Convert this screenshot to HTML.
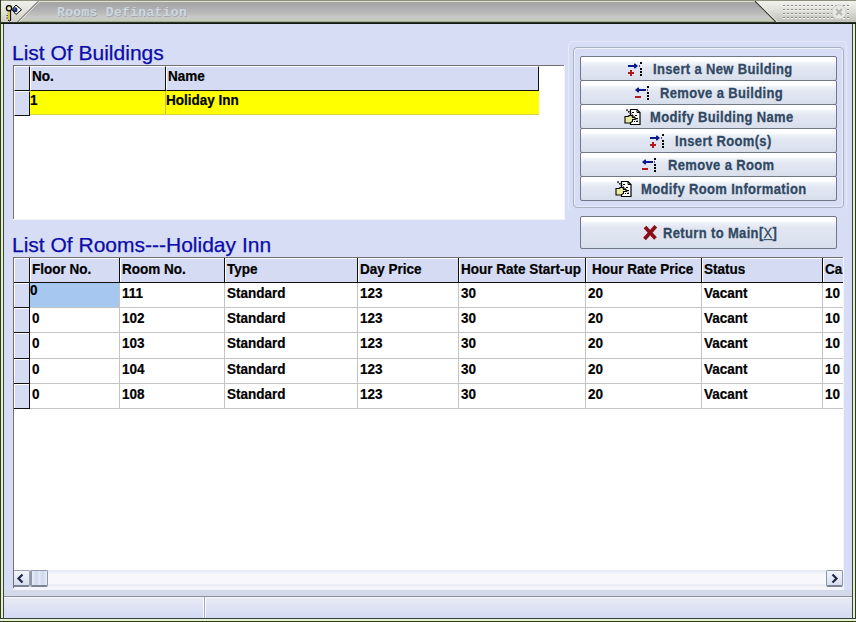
<!DOCTYPE html>
<html><head><meta charset="utf-8">
<style>
*{margin:0;padding:0;box-sizing:border-box}
html,body{width:856px;height:622px;overflow:hidden;background:#D6DDF5;font-family:"Liberation Sans",sans-serif}
.a{position:absolute}
#title{left:0;top:0;width:856px;height:24px;
background:linear-gradient(#8E9080 0,#8E9080 1px,#E0E0D0 1px,#E0E0D0 2px,#A6A7A0 2px,#A9A9AC 6px,#B4B4B6 11px,#C0C0BC 15px,#C8C8D0 17px,#C6CAB8 19px,#C6CAB8 21px,#A4A898 21px,#A4A898 22px,#2C342C 22px,#2C342C 23px,#101810 23px,#101810 24px)}
.hd{font-size:21px;color:#0C0CA8;white-space:nowrap;-webkit-text-stroke:0.25px #0C0CA8}
.grid{background:#fff}
.hc{background:#D5DBF2;border-top:1px solid #fff;border-left:1px solid #fff}
.t13{font-size:13.5px;font-weight:bold;color:#000;white-space:nowrap;letter-spacing:0;-webkit-text-stroke:0.2px #000;transform:scaleY(1.1);transform-origin:0 12px}
.btn{border:1px solid #707888;border-radius:2px;background:linear-gradient(#FFFFFF 0,#FDFDFE 4px,#EEF1F8 6px,#E2E7F2 10px,#D8DFEC 100%)}
.bt{font-size:13px;font-weight:bold;color:#304862;letter-spacing:0.35px;white-space:nowrap;-webkit-text-stroke:0.25px #304862;transform:scaleY(1.08);transform-origin:0 12px}
</style></head><body>
<!-- window frame -->
<div class="a" style="left:0;top:0;width:1px;height:622px;background:#2E3C10"></div>
<div class="a" style="left:1px;top:24px;width:2px;height:595px;background:#E6F0D4"></div>
<div class="a" style="left:3px;top:24px;width:1px;height:595px;background:#34443A"></div>
<div class="a" style="left:852px;top:24px;width:1px;height:595px;background:#34443A"></div>
<div class="a" style="left:853px;top:24px;width:2px;height:595px;background:#E6F0D4"></div>
<div class="a" style="left:855px;top:0;width:1px;height:622px;background:#2E3C10"></div>
<div class="a" style="left:0;top:618px;width:856px;height:1px;background:#34443A"></div>
<div class="a" style="left:0;top:619px;width:856px;height:2px;background:#E6F0D4"></div>
<div class="a" style="left:0;top:621px;width:856px;height:1px;background:#2E3C10"></div>

<!-- title bar -->
<div id="title" class="a"></div>
<svg class="a" style="left:0;top:0" width="856" height="24">
  <defs>
    <linearGradient id="lg" x1="0" y1="0" x2="0" y2="1"><stop offset="0" stop-color="#F0F0EA"/><stop offset="0.5" stop-color="#E2E2DC"/><stop offset="1" stop-color="#CDCEC4"/></linearGradient>
    <linearGradient id="rg" x1="0" y1="0" x2="0" y2="1"><stop offset="0" stop-color="#F2F2EC"/><stop offset="0.45" stop-color="#E0E0DA"/><stop offset="1" stop-color="#BEBFB6"/></linearGradient>
    <pattern id="dots" x="783" y="5" width="4" height="4" patternUnits="userSpaceOnUse"><rect x="0" y="0" width="2" height="1" fill="#86888A"/><rect x="0" y="1" width="2" height="1" fill="#FAFAF6"/></pattern>
  </defs>
  <polygon points="1,1 38,1 17,22 1,22" fill="url(#lg)"/>
  <line x1="38.5" y1="1" x2="17.5" y2="22" stroke="#6A6A60" stroke-width="1"/>
  <line x1="40" y1="1" x2="19" y2="22" stroke="#F0F0E8" stroke-width="1" opacity="0.8"/>
  <polygon points="755,1 856,1 856,22 776,22" fill="url(#rg)"/>
  <line x1="755" y1="1" x2="776" y2="22" stroke="#3A3A30" stroke-width="1.1"/>
  <line x1="756.5" y1="1" x2="777.5" y2="22" stroke="#F4F4F0" stroke-width="1"/>
  <rect x="783" y="5" width="68" height="14" fill="url(#dots)"/>
  <circle cx="839" cy="12" r="7" fill="#E8E8E4" stroke="#CFCFCA" stroke-width="1"/>
  <path d="M836 9 L842 15 M842 9 L836 15" stroke="#B8B8B2" stroke-width="2.2"/>
  <!-- key icon -->
  <rect x="7.5" y="10.5" width="2.6" height="9.5" fill="#D8C850"/>
  <path d="M10.6 11 V20.5 L9.3 21 L8 20 M7.6 15.5 H6.6 M7.6 18 H6.6" fill="none" stroke="#000" stroke-width="1"/>
  <circle cx="9" cy="8.2" r="2.6" fill="#E4DC98" stroke="#000" stroke-width="1.3"/>
  <circle cx="9.4" cy="8.6" r="0.9" fill="#fff"/>
  <polygon points="16,5 21.5,9.7 16,14.5 12,9.7" fill="#fff" stroke="#000" stroke-width="1"/>
  <circle cx="15" cy="9.7" r="2.5" fill="#1A2A64"/>
  <circle cx="14.6" cy="9.0" r="0.8" fill="#7A8AC0"/>
  <text x="57.5" y="16.5" font-family="Liberation Mono" font-size="13" font-weight="bold" letter-spacing="0.33" fill="#6A6E72" opacity="0.35">Rooms Defination</text>
  <text x="57" y="16" font-family="Liberation Mono" font-size="13" font-weight="bold" letter-spacing="0.33" fill="#CCD8E2">Rooms Defination</text>
</svg>
<div class="a" style="left:0;top:0;width:856px;height:1px;background:#8E9080"></div>
<div class="a" style="left:0;top:0;width:1px;height:24px;background:#2E3C10"></div>

<!-- heading buildings -->
<div class="a hd" style="left:12px;top:41px;line-height:24px">List Of Buildings</div>

<!-- buildings grid -->
<div class="a grid" style="left:13px;top:65px;width:551px;height:154px;border-top:1px solid #707070;border-left:1px solid #707070"></div>
<div class="a hc" style="left:14px;top:66px;width:16px;height:25px;border-right:1px solid #101010;border-bottom:1px solid #101010"></div>
<div class="a hc" style="left:14px;top:91px;width:16px;height:25px;border-right:1px solid #101010;border-bottom:1px solid #101010"></div>
<div class="a hc" style="left:30px;top:66px;width:136px;height:25px;border-right:1px solid #101010;border-bottom:1px solid #101010"></div>
<div class="a hc" style="left:166px;top:66px;width:373px;height:25px;border-right:1px solid #101010;border-bottom:1px solid #101010"></div>
<div class="a" style="left:30px;top:91px;width:509px;height:24px;background:#FFFF00"></div>
<div class="a" style="left:165px;top:91px;width:1px;height:24px;background:#C8C050"></div>
<div class="a" style="left:30px;top:114px;width:509px;height:1px;background:#D8D040"></div>
<div class="a t13" style="left:32px;top:69px;line-height:15px">No.</div>
<div class="a t13" style="left:168px;top:69px;line-height:15px">Name</div>
<div class="a t13" style="left:30px;top:93px;line-height:15px">1</div>
<div class="a t13" style="left:166px;top:93px;line-height:15px">Holiday Inn</div>

<!-- button panel -->
<div class="a" style="left:568px;top:41px;width:279px;height:170px;border:1px solid #E6EAF8;border-bottom-color:transparent;border-radius:5px"></div>
<div class="a" style="left:573px;top:47px;width:271px;height:161px;border:1px solid #A8B0C4;border-radius:4px;box-shadow:inset 1px 1px 0 #EEF0FA,inset -1px -1px 0 #E8ECFA"></div>
<div class="a btn" style="left:580px;top:56px;width:257px;height:25px"></div>
<div class="a btn" style="left:580px;top:80px;width:257px;height:25px"></div>
<div class="a btn" style="left:580px;top:104px;width:257px;height:25px"></div>
<div class="a btn" style="left:580px;top:128px;width:257px;height:25px"></div>
<div class="a btn" style="left:580px;top:152px;width:257px;height:25px"></div>
<div class="a btn" style="left:580px;top:176px;width:257px;height:25px"></div>
<div class="a bt" style="left:653px;top:62px;line-height:16px">Insert a New Building</div>
<div class="a bt" style="left:660px;top:86px;line-height:16px">Remove a Building</div>
<div class="a bt" style="left:650px;top:110px;line-height:16px">Modify Building Name</div>
<div class="a bt" style="left:675px;top:134px;line-height:16px">Insert Room(s)</div>
<div class="a bt" style="left:668px;top:158px;line-height:16px">Remove a Room</div>
<div class="a bt" style="left:641px;top:182px;line-height:16px">Modify Room Information</div>

<!-- return button -->
<div class="a btn" style="left:580px;top:216px;width:257px;height:33px"></div>
<div class="a bt" style="left:663px;top:226px;line-height:16px;letter-spacing:0.35px">Return to Main[<span style="font-weight:normal;text-decoration:underline">X</span>]</div>

<!-- heading rooms -->
<div class="a hd" style="left:12px;top:233px;line-height:24px">List Of Rooms---Holiday Inn</div>

<!-- rooms grid -->
<div class="a grid" style="left:13px;top:257px;width:831px;height:331px;border-top:1px solid #707070;border-left:1px solid #707070"></div>

<svg class="a" style="left:626px;top:60px" width="18" height="18" shape-rendering="crispEdges">
<rect x="2" y="5" width="9" height="2" fill="#0C1A8C"/>
<path d="M8.5 3 L12 6 L8.5 9 Z" fill="#0C1A8C" shape-rendering="auto"/>
<rect x="8" y="4" width="2" height="4" fill="#0C1A8C"/>
<rect x="13" y="5" width="1" height="2" fill="#6A4A7A"/>
<rect x="2" y="12" width="6" height="2" fill="#B41A1A"/>
<rect x="4" y="10" width="2" height="6" fill="#B41A1A"/>
<rect x="14" y="2" width="2" height="2" fill="#000"/>
<rect x="14" y="8" width="2" height="2" fill="#000"/>
<rect x="14" y="11" width="2" height="2" fill="#000"/>
<rect x="14" y="14" width="2" height="2" fill="#000"/>
</svg>
<svg class="a" style="left:633px;top:84px" width="18" height="18" shape-rendering="crispEdges">
<rect x="4" y="5" width="9" height="2" fill="#0C1A8C"/>
<path d="M5.5 3 L2 6 L5.5 9 Z" fill="#0C1A8C" shape-rendering="auto"/>
<rect x="4" y="4" width="2" height="4" fill="#0C1A8C"/>
<rect x="14" y="5" width="1" height="2" fill="#6A4A7A"/>
<rect x="2" y="12" width="6" height="2" fill="#B41A1A"/>
<rect x="14" y="2" width="2" height="2" fill="#000"/>
<rect x="14" y="8" width="2" height="2" fill="#000"/>
<rect x="14" y="11" width="2" height="2" fill="#000"/>
<rect x="14" y="14" width="2" height="2" fill="#000"/>
</svg>
<svg class="a" style="left:624px;top:108px" width="18" height="18">
<path d="M6.5 1.5 H13 L16 4.5 V16.5 H6.5 Z" fill="#fff" stroke="#000" stroke-width="1.2"/>
<path d="M13 1.5 V4.5 H16" fill="none" stroke="#000" stroke-width="1"/>
<rect x="8" y="4" width="2" height="1" fill="#000"/><rect x="11" y="7" width="2" height="1" fill="#000"/>
<rect x="12" y="10" width="2" height="1" fill="#000"/><rect x="10" y="13" width="1" height="1" fill="#000"/><rect x="12" y="13" width="2" height="1" fill="#000"/>
<path d="M2.5 1.5 L13.5 12.5" stroke="#000" stroke-width="1.6" stroke-dasharray="1.5 1"/>
<path d="M1 8.5 H4 Q6 6.5 9 8 L8.5 9.5 H11 V11.5 H8.5 V13.5 L6 15 H1 Z" fill="#E8EC9C" stroke="#000" stroke-width="1.1"/>
</svg>
<svg class="a" style="left:648px;top:132px" width="18" height="18" shape-rendering="crispEdges">
<rect x="2" y="5" width="9" height="2" fill="#0C1A8C"/>
<path d="M8.5 3 L12 6 L8.5 9 Z" fill="#0C1A8C" shape-rendering="auto"/>
<rect x="8" y="4" width="2" height="4" fill="#0C1A8C"/>
<rect x="13" y="5" width="1" height="2" fill="#6A4A7A"/>
<rect x="2" y="12" width="6" height="2" fill="#B41A1A"/>
<rect x="4" y="10" width="2" height="6" fill="#B41A1A"/>
<rect x="14" y="2" width="2" height="2" fill="#000"/>
<rect x="14" y="8" width="2" height="2" fill="#000"/>
<rect x="14" y="11" width="2" height="2" fill="#000"/>
<rect x="14" y="14" width="2" height="2" fill="#000"/>
</svg>
<svg class="a" style="left:640px;top:156px" width="18" height="18" shape-rendering="crispEdges">
<rect x="4" y="5" width="9" height="2" fill="#0C1A8C"/>
<path d="M5.5 3 L2 6 L5.5 9 Z" fill="#0C1A8C" shape-rendering="auto"/>
<rect x="4" y="4" width="2" height="4" fill="#0C1A8C"/>
<rect x="14" y="5" width="1" height="2" fill="#6A4A7A"/>
<rect x="2" y="12" width="6" height="2" fill="#B41A1A"/>
<rect x="14" y="2" width="2" height="2" fill="#000"/>
<rect x="14" y="8" width="2" height="2" fill="#000"/>
<rect x="14" y="11" width="2" height="2" fill="#000"/>
<rect x="14" y="14" width="2" height="2" fill="#000"/>
</svg>
<svg class="a" style="left:615px;top:180px" width="18" height="18">
<path d="M6.5 1.5 H13 L16 4.5 V16.5 H6.5 Z" fill="#fff" stroke="#000" stroke-width="1.2"/>
<path d="M13 1.5 V4.5 H16" fill="none" stroke="#000" stroke-width="1"/>
<rect x="8" y="4" width="2" height="1" fill="#000"/><rect x="11" y="7" width="2" height="1" fill="#000"/>
<rect x="12" y="10" width="2" height="1" fill="#000"/><rect x="10" y="13" width="1" height="1" fill="#000"/><rect x="12" y="13" width="2" height="1" fill="#000"/>
<path d="M2.5 1.5 L13.5 12.5" stroke="#000" stroke-width="1.6" stroke-dasharray="1.5 1"/>
<path d="M1 8.5 H4 Q6 6.5 9 8 L8.5 9.5 H11 V11.5 H8.5 V13.5 L6 15 H1 Z" fill="#E8EC9C" stroke="#000" stroke-width="1.1"/>
</svg>
<svg class="a" style="left:643px;top:225px" width="16" height="16">
<path d="M2 2 L12.5 13.5 M12.8 1.2 L1.5 14" stroke="#8A0E18" stroke-width="3.7" stroke-linecap="butt"/>
</svg>
<div class="a" style="left:14px;top:258px;width:829px;height:312px;overflow:hidden">
<div class="a" style="left:0px;top:0px;width:829px;height:24px;background:#D5DBF2"></div>
<div class="a" style="left:0px;top:25px;width:15px;height:125px;background:#D5DBF2"></div>
<div class="a" style="left:0px;top:0px;width:829px;height:1px;background:#fff"></div>
<div class="a" style="left:0px;top:0px;width:1px;height:150px;background:#fff"></div>
<div class="a" style="left:15px;top:0px;width:1px;height:24px;background:#101010"></div>
<div class="a" style="left:16px;top:0px;width:1px;height:24px;background:#fff"></div>
<div class="a" style="left:105px;top:0px;width:1px;height:24px;background:#101010"></div>
<div class="a" style="left:106px;top:0px;width:1px;height:24px;background:#fff"></div>
<div class="a" style="left:105px;top:25px;width:1px;height:125px;background:#C4C4C4"></div>
<div class="a" style="left:210px;top:0px;width:1px;height:24px;background:#101010"></div>
<div class="a" style="left:211px;top:0px;width:1px;height:24px;background:#fff"></div>
<div class="a" style="left:210px;top:25px;width:1px;height:125px;background:#C4C4C4"></div>
<div class="a" style="left:343px;top:0px;width:1px;height:24px;background:#101010"></div>
<div class="a" style="left:344px;top:0px;width:1px;height:24px;background:#fff"></div>
<div class="a" style="left:343px;top:25px;width:1px;height:125px;background:#C4C4C4"></div>
<div class="a" style="left:444px;top:0px;width:1px;height:24px;background:#101010"></div>
<div class="a" style="left:445px;top:0px;width:1px;height:24px;background:#fff"></div>
<div class="a" style="left:444px;top:25px;width:1px;height:125px;background:#C4C4C4"></div>
<div class="a" style="left:571px;top:0px;width:1px;height:24px;background:#101010"></div>
<div class="a" style="left:572px;top:0px;width:1px;height:24px;background:#fff"></div>
<div class="a" style="left:571px;top:25px;width:1px;height:125px;background:#C4C4C4"></div>
<div class="a" style="left:687px;top:0px;width:1px;height:24px;background:#101010"></div>
<div class="a" style="left:688px;top:0px;width:1px;height:24px;background:#fff"></div>
<div class="a" style="left:687px;top:25px;width:1px;height:125px;background:#C4C4C4"></div>
<div class="a" style="left:808px;top:0px;width:1px;height:24px;background:#101010"></div>
<div class="a" style="left:809px;top:0px;width:1px;height:24px;background:#fff"></div>
<div class="a" style="left:808px;top:25px;width:1px;height:125px;background:#C4C4C4"></div>
<div class="a" style="left:0px;top:24px;width:829px;height:1px;background:#101010"></div>
<div class="a" style="left:16px;top:49px;width:813px;height:1px;background:#C4C4C4"></div>
<div class="a" style="left:0px;top:49px;width:16px;height:1px;background:#101010"></div>
<div class="a" style="left:0px;top:25px;width:15px;height:1px;background:#fff"></div>
<div class="a" style="left:16px;top:74px;width:813px;height:1px;background:#C4C4C4"></div>
<div class="a" style="left:0px;top:74px;width:16px;height:1px;background:#101010"></div>
<div class="a" style="left:0px;top:50px;width:15px;height:1px;background:#fff"></div>
<div class="a" style="left:16px;top:100px;width:813px;height:1px;background:#C4C4C4"></div>
<div class="a" style="left:0px;top:100px;width:16px;height:1px;background:#101010"></div>
<div class="a" style="left:0px;top:75px;width:15px;height:1px;background:#fff"></div>
<div class="a" style="left:16px;top:125px;width:813px;height:1px;background:#C4C4C4"></div>
<div class="a" style="left:0px;top:125px;width:16px;height:1px;background:#101010"></div>
<div class="a" style="left:0px;top:101px;width:15px;height:1px;background:#fff"></div>
<div class="a" style="left:16px;top:150px;width:813px;height:1px;background:#C4C4C4"></div>
<div class="a" style="left:0px;top:150px;width:16px;height:1px;background:#101010"></div>
<div class="a" style="left:0px;top:126px;width:15px;height:1px;background:#fff"></div>
<div class="a" style="left:15px;top:24px;width:1px;height:127px;background:#101010"></div>
<div class="a" style="left:16px;top:25px;width:89px;height:24px;background:#A6C8F0"></div>
<div class="a t13" style="left:18px;top:4px;line-height:15px;">Floor No.</div>
<div class="a t13" style="left:108px;top:4px;line-height:15px;">Room No.</div>
<div class="a t13" style="left:213px;top:4px;line-height:15px;">Type</div>
<div class="a t13" style="left:346px;top:4px;line-height:15px;">Day Price</div>
<div class="a t13" style="left:447px;top:4px;line-height:15px;">Hour Rate Start-up</div>
<div class="a t13" style="left:578px;top:4px;line-height:15px;">Hour Rate Price</div>
<div class="a t13" style="left:690px;top:4px;line-height:15px;">Status</div>
<div class="a t13" style="left:811px;top:4px;line-height:15px;">Ca</div>
<div class="a t13" style="left:16px;top:25px;line-height:15px;">0</div>
<div class="a t13" style="left:108px;top:28px;line-height:15px;">111</div>
<div class="a t13" style="left:213px;top:28px;line-height:15px;">Standard</div>
<div class="a t13" style="left:346px;top:28px;line-height:15px;">123</div>
<div class="a t13" style="left:447px;top:28px;line-height:15px;">30</div>
<div class="a t13" style="left:574px;top:28px;line-height:15px;">20</div>
<div class="a t13" style="left:690px;top:28px;line-height:15px;">Vacant</div>
<div class="a t13" style="left:811px;top:28px;line-height:15px;">10</div>
<div class="a t13" style="left:18px;top:53px;line-height:15px;">0</div>
<div class="a t13" style="left:108px;top:53px;line-height:15px;">102</div>
<div class="a t13" style="left:213px;top:53px;line-height:15px;">Standard</div>
<div class="a t13" style="left:346px;top:53px;line-height:15px;">123</div>
<div class="a t13" style="left:447px;top:53px;line-height:15px;">30</div>
<div class="a t13" style="left:574px;top:53px;line-height:15px;">20</div>
<div class="a t13" style="left:690px;top:53px;line-height:15px;">Vacant</div>
<div class="a t13" style="left:811px;top:53px;line-height:15px;">10</div>
<div class="a t13" style="left:18px;top:78px;line-height:15px;">0</div>
<div class="a t13" style="left:108px;top:78px;line-height:15px;">103</div>
<div class="a t13" style="left:213px;top:78px;line-height:15px;">Standard</div>
<div class="a t13" style="left:346px;top:78px;line-height:15px;">123</div>
<div class="a t13" style="left:447px;top:78px;line-height:15px;">30</div>
<div class="a t13" style="left:574px;top:78px;line-height:15px;">20</div>
<div class="a t13" style="left:690px;top:78px;line-height:15px;">Vacant</div>
<div class="a t13" style="left:811px;top:78px;line-height:15px;">10</div>
<div class="a t13" style="left:18px;top:104px;line-height:15px;">0</div>
<div class="a t13" style="left:108px;top:104px;line-height:15px;">104</div>
<div class="a t13" style="left:213px;top:104px;line-height:15px;">Standard</div>
<div class="a t13" style="left:346px;top:104px;line-height:15px;">123</div>
<div class="a t13" style="left:447px;top:104px;line-height:15px;">30</div>
<div class="a t13" style="left:574px;top:104px;line-height:15px;">20</div>
<div class="a t13" style="left:690px;top:104px;line-height:15px;">Vacant</div>
<div class="a t13" style="left:811px;top:104px;line-height:15px;">10</div>
<div class="a t13" style="left:18px;top:129px;line-height:15px;">0</div>
<div class="a t13" style="left:108px;top:129px;line-height:15px;">108</div>
<div class="a t13" style="left:213px;top:129px;line-height:15px;">Standard</div>
<div class="a t13" style="left:346px;top:129px;line-height:15px;">123</div>
<div class="a t13" style="left:447px;top:129px;line-height:15px;">30</div>
<div class="a t13" style="left:574px;top:129px;line-height:15px;">20</div>
<div class="a t13" style="left:690px;top:129px;line-height:15px;">Vacant</div>
<div class="a t13" style="left:811px;top:129px;line-height:15px;">10</div>
</div>
<div class="a" style="left:564px;top:65px;width:1px;height:155px;background:#F2F4FA"></div>
<div class="a" style="left:13px;top:219px;width:552px;height:1px;background:#F2F4FA"></div>
<div class="a" style="left:843px;top:257px;width:1px;height:333px;background:#F2F4FA"></div>
<div class="a" style="left:13px;top:589px;width:831px;height:1px;background:#F2F4FA"></div>
<div class="a" style="left:14px;top:570px;width:829px;height:19px;background:linear-gradient(#E6E8F4 0,#ECEEF8 2px,#F8F8FC 4px,#F8F8FC 14px,#E4E6EE 15px,#F0F2F8 16px,#F4F6FC 18px)"></div>
<div class="a" style="left:14px;top:570px;width:16px;height:17px;border:1px solid #9AA2B4;border-left:none;border-bottom:2px solid #7A8294;border-radius:0 2px 2px 0;background:linear-gradient(#F4F6FC,#D8DEF0)"><svg width="14" height="14" style="position:absolute;left:0;top:0"><path d="M8.5 3.5 L4.5 7.5 L8.5 11.5" fill="none" stroke="#1E2A44" stroke-width="2.2"/></svg></div>
<div class="a" style="left:30px;top:570px;width:18px;height:17px;border:1px solid #8E96A8;border-left:2px solid #8E96A8;border-bottom:2px solid #7A8294;border-radius:2px;background:linear-gradient(90deg,#E8ECF8,#D0D8EE 30%,#E4E8F6 50%,#D0D8EE 70%,#E8ECF8)"></div>
<div class="a" style="left:826px;top:570px;width:17px;height:17px;border:1px solid #8E96A8;border-bottom:2px solid #7A8294;border-radius:2px;background:linear-gradient(#F4F6FC,#D8DEF0)"><svg width="15" height="14" style="position:absolute;left:0;top:0"><path d="M5.5 3.5 L9.5 7.5 L5.5 11.5" fill="none" stroke="#1E2A44" stroke-width="2.2"/></svg></div>
<div class="a" style="left:4px;top:590px;width:848px;height:6px;background:#D4D9EA"></div>
<div class="a" style="left:4px;top:596px;width:848px;height:1px;background:#8C909C"></div>
<div class="a" style="left:4px;top:597px;width:848px;height:1px;background:#F4F6FC"></div>
<div class="a" style="left:4px;top:598px;width:848px;height:20px;background:linear-gradient(#E8EAF4,#D4DAF4)"></div>
<div class="a" style="left:203px;top:597px;width:1px;height:21px;background:#F8F8FF"></div>
<div class="a" style="left:204px;top:597px;width:1px;height:21px;background:#A8ACBC"></div>
<div class="a" style="left:205px;top:597px;width:1px;height:21px;background:#F8F8FF"></div>
</body></html>
